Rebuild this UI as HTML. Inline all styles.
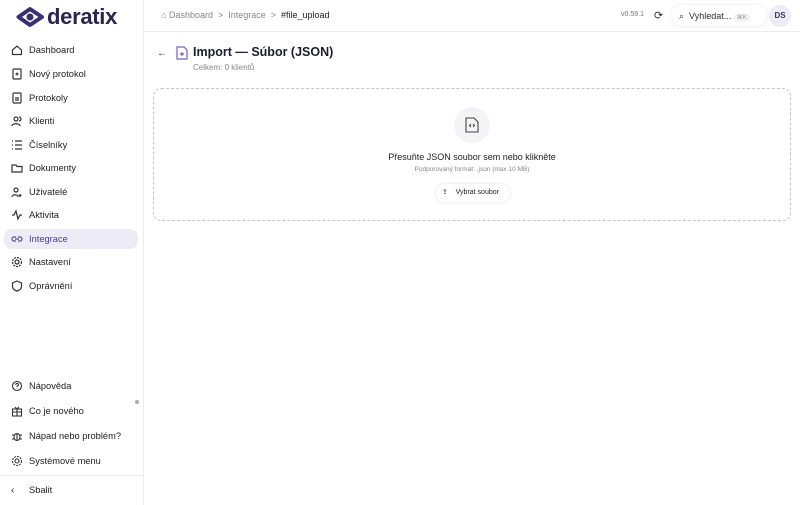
<!DOCTYPE html>
<html><head><meta charset="utf-8"><style>
*{box-sizing:border-box;margin:0;padding:0}
body{width:800px;height:505px;overflow:hidden;background:#fff;font-family:"Liberation Sans",sans-serif;color:#1d1d2b;position:relative}
.sb{position:absolute;left:0;top:0;width:144px;height:505px;border-right:1px solid #ececf0;background:#fff}
.hd{position:absolute;left:0;top:0;width:800px;height:32px;border-bottom:1px solid #ededf1}
.logo{position:absolute;left:16px;top:4px;font-size:22px;font-weight:bold;color:#2b2450;letter-spacing:-0.3px;display:flex;align-items:center}
.item{position:absolute;left:4px;width:134px;height:20px;font-size:9.3px;display:flex;align-items:center;padding-left:7px;border-radius:8px;color:#222}
.item svg{width:12px;height:12px;margin-right:6px;flex:none}
.act{background:#ecebf6;color:#4a3f8a}
.bc{position:absolute;left:161px;top:10px;font-size:9px;color:#888}
.bc b{color:#222;font-weight:normal}
</style></head><body>
<div class="hd"></div>
<div class="sb"></div>
<div class="logo"><svg width="30" height="22" viewBox="0 0 30 22" style="margin-right:1px"><path d="M2.5 11 L14 3 L26 11 L14 19Z" fill="none" stroke="#3a2f70" stroke-width="4" stroke-linejoin="round"/><circle cx="14" cy="11" r="3.5" fill="#3a2f70"/></svg><span>deratix</span></div>
<div class="bc">⌂ Dashboard &nbsp;&gt;&nbsp; Integrace &nbsp;&gt;&nbsp; <b>#file_upload</b></div>
<div style="position:absolute;left:621px;top:11px;font-size:7px;color:#777">v0.59.1</div>
<div style="position:absolute;left:654px;top:9px;font-size:11px;color:#333">⟳</div>
<div style="position:absolute;left:671px;top:5px;width:96px;height:21px;border-radius:10px;background:#fff;box-shadow:0 0 3px #e4e4ea;font-size:9px;color:#333;padding:6px 0 0 8px">⌕ &nbsp;Vyhledat... <span style="font-size:6px;color:#999;background:#f2f2f5;padding:1px 3px;border-radius:3px">⌘K</span></div>
<div style="position:absolute;left:769px;top:5px;width:22px;height:22px;border-radius:50%;background:#ecebf6;font-size:8px;font-weight:bold;color:#3a3560;text-align:center;line-height:22px">DS</div>

<div class="item" style="top:40px"><svg viewBox="0 0 12 12" fill="none" stroke="#333" stroke-width="1.2"><path d="M1.5 6 6 2l4.5 4v4.5h-9z"/></svg>Dashboard</div>
<div class="item" style="top:64px"><svg viewBox="0 0 12 12" fill="none" stroke="#333" stroke-width="1.2"><rect x="2" y="1" width="8" height="10" rx="1"/><path d="M6 4.5v3M4.5 6h3"/></svg>Nový protokol</div>
<div class="item" style="top:88px"><svg viewBox="0 0 12 12" fill="none" stroke="#333" stroke-width="1.2"><rect x="2" y="1" width="8" height="10" rx="1"/><path d="M4 6h4M4 8h4"/></svg>Protokoly</div>
<div class="item" style="top:111px"><svg viewBox="0 0 12 12" fill="none" stroke="#333" stroke-width="1.2"><circle cx="5" cy="4" r="2"/><path d="M1 11c0-3 8-3 8 0M8 2a2 2 0 010 4"/></svg>Klienti</div>
<div class="item" style="top:135px"><svg viewBox="0 0 12 12" fill="none" stroke="#333" stroke-width="1.2"><path d="M1 2h1M1 6h1M1 10h1M4 2h7M4 6h7M4 10h7"/></svg>Číselníky</div>
<div class="item" style="top:158px"><svg viewBox="0 0 12 12" fill="none" stroke="#333" stroke-width="1.2"><path d="M1 3h4l1 1.5h5V10H1z"/></svg>Dokumenty</div>
<div class="item" style="top:182px"><svg viewBox="0 0 12 12" fill="none" stroke="#333" stroke-width="1.2"><circle cx="5" cy="4" r="2"/><path d="M1 11c0-3 6-3 6 0M9 8v3M7.5 9.5h3"/></svg>Uživatelé</div>
<div class="item" style="top:205px"><svg viewBox="0 0 12 12" fill="none" stroke="#333" stroke-width="1.2"><path d="M1 6h2l2-4 2 8 2-4h2"/></svg>Aktivita</div>
<div class="item act" style="top:229px"><svg viewBox="0 0 12 12" fill="none" stroke="#5a5090" stroke-width="1.2"><path d="M5 4H3a2 2 0 000 4h2M7 4h2a2 2 0 010 4H7M4 6h4"/></svg>Integrace</div>
<div class="item" style="top:252px"><svg viewBox="0 0 12 12" fill="none" stroke="#333" stroke-width="1.2"><circle cx="6" cy="6" r="2"/><circle cx="6" cy="6" r="4.5" stroke-dasharray="2 1"/></svg>Nastavení</div>
<div class="item" style="top:276px"><svg viewBox="0 0 12 12" fill="none" stroke="#333" stroke-width="1.2"><path d="M6 1l4.5 2v3c0 3-2.5 4.5-4.5 5C4 10.5 1.5 9 1.5 6V3z"/></svg>Oprávnění</div>

<div class="item" style="top:376px"><svg viewBox="0 0 12 12" fill="none" stroke="#333" stroke-width="1.1"><circle cx="6" cy="6" r="4.5"/><path d="M4.8 4.8a1.3 1.3 0 112 1c-.6.3-.8.6-.8 1.2M6 8.5v.2"/></svg>Nápověda</div>
<div class="item" style="top:401px"><svg viewBox="0 0 12 12" fill="none" stroke="#333" stroke-width="1.1"><rect x="1.5" y="4" width="9" height="7"/><path d="M1.5 7h9M6 4v7M4 2l2 2 2-2"/></svg>Co je nového</div>
<div style="position:absolute;left:135px;top:400px;width:4px;height:4px;border-radius:50%;background:#aab"></div>
<div class="item" style="top:426px"><svg viewBox="0 0 12 12" fill="none" stroke="#333" stroke-width="1.1"><ellipse cx="6" cy="7" rx="3" ry="3.5"/><path d="M1 5h2M9 5h2M1 9h2M9 9h2M6 3.5V10"/></svg>Nápad nebo problém?</div>
<div class="item" style="top:451px"><svg viewBox="0 0 12 12" fill="none" stroke="#333" stroke-width="1.1"><circle cx="6" cy="6" r="2"/><circle cx="6" cy="6" r="4.5" stroke-dasharray="2 1"/></svg>Systémové menu</div>
<div style="position:absolute;left:0;top:475px;width:144px;border-top:1px solid #ececf0"></div>
<div class="item" style="top:480px"><span style="width:12px;margin-right:6px;font-size:10px">‹</span>Sbalit</div>

<div style="position:absolute;left:157px;top:48px;font-size:10px;color:#333">←</div>
<svg style="position:absolute;left:176px;top:46px" width="12" height="14" viewBox="0 0 12 14" fill="none" stroke="#7a5cc0" stroke-width="1.2"><path d="M1 1h7l3 3v9H1z"/><path d="M6 6v4M4 8h4"/></svg>
<div style="position:absolute;left:193px;top:45px;font-size:12.5px;font-weight:bold;color:#1d1d2b">Import — Súbor (JSON)</div>
<div style="position:absolute;left:193px;top:63px;font-size:8px;color:#888">Celkem: 0 klientů</div>

<div style="position:absolute;left:153px;top:88px;width:638px;height:133px;border:1px dashed #c4c4cc;border-radius:8px"></div>
<div style="position:absolute;left:454px;top:107px;width:36px;height:36px;border-radius:50%;background:#f4f4f6"></div>
<svg style="position:absolute;left:465px;top:117px" width="14" height="16" viewBox="0 0 14 16" fill="none" stroke="#444" stroke-width="1.1"><path d="M1 1h8l4 4v10H1z"/><path d="M6 7l-1.5 1.5L6 10M8 7l1.5 1.5L8 10"/></svg>
<div style="position:absolute;left:153px;width:638px;top:152px;text-align:center;font-size:9px;color:#222">Přesuňte JSON soubor sem nebo klikněte</div>
<div style="position:absolute;left:153px;width:638px;top:166px;text-align:center;font-size:6.5px;color:#888">Podporovaný formát: .json (max 10 MB)</div>
<div style="position:absolute;left:436px;top:184px;width:74px;height:18px;border-radius:9px;box-shadow:0 0 3px #e0e0e6;font-size:7px;color:#222;padding:4px 0 0 6px">⇪ &nbsp;&nbsp;&nbsp;Vybrat soubor</div>
</body></html>
